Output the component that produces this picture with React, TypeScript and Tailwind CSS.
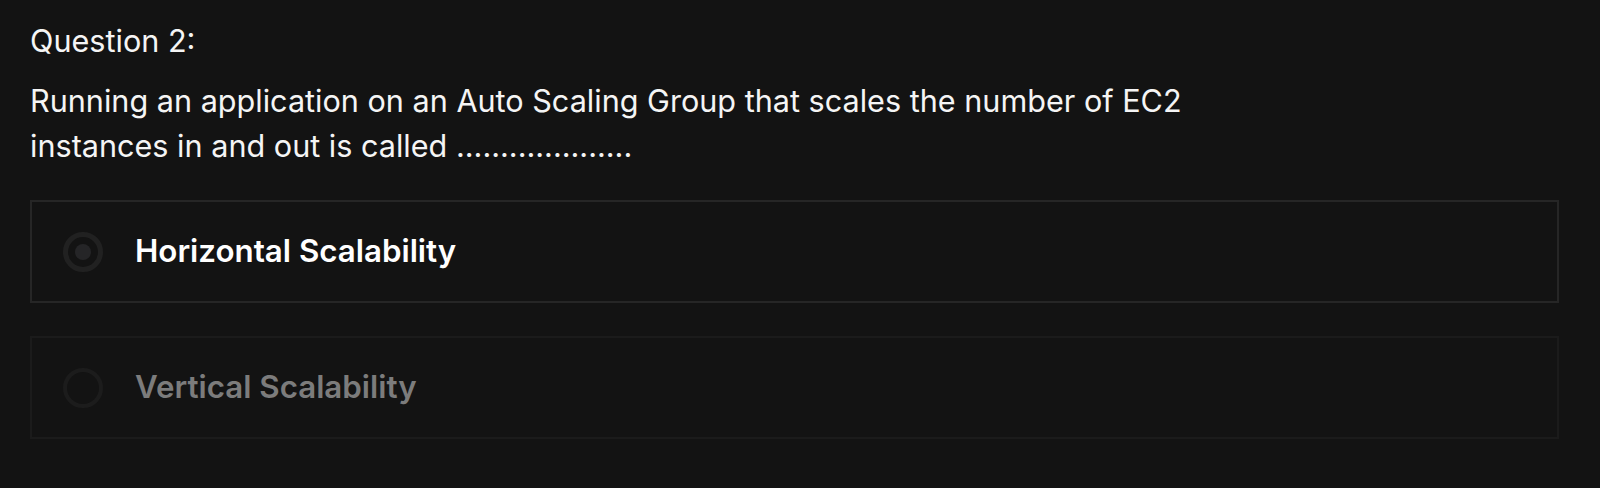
import React from "react";

export default function App() {
  return (
    <div
      className="min-h-[488px] w-full bg-[#131313] pl-[30px] pt-[18px] text-white"
      style={{ fontFamily: "Inter, 'Noto Sans', sans-serif" }}
    >
      <div className="text-[30.6px] leading-[45px] text-[#f5f5f5]">Question 2:</div>
      <p className="mt-[15px] max-w-[1220px] text-[30.6px] leading-[45px] text-[#f5f5f5]">
        Running an application on an Auto Scaling Group that scales the number of EC2 instances in and out is called ....................
      </p>
      <div className="mt-[32px] flex w-[1529px] flex-col gap-[33px]">
        <div className="flex h-[103px] items-center border-2 border-[#262626] pl-[31px]">
          <div className="flex h-[40px] w-[40px] items-center justify-center rounded-full border-[5px] border-[#212121]">
            <div className="h-[16px] w-[16px] rounded-full bg-[#252527]" />
          </div>
          <span className="ml-[32px] text-[31.3px] font-semibold text-white">Horizontal Scalability</span>
        </div>
        <div className="flex h-[103px] items-center border-2 border-[#1b1b1b] pl-[31px]">
          <div className="h-[40px] w-[40px] rounded-full border-[4px] border-[#1c1c1c]" />
          <span className="ml-[32px] text-[31.3px] font-semibold text-[#7c7c7c]">Vertical Scalability</span>
        </div>
      </div>
    </div>
  );
}
